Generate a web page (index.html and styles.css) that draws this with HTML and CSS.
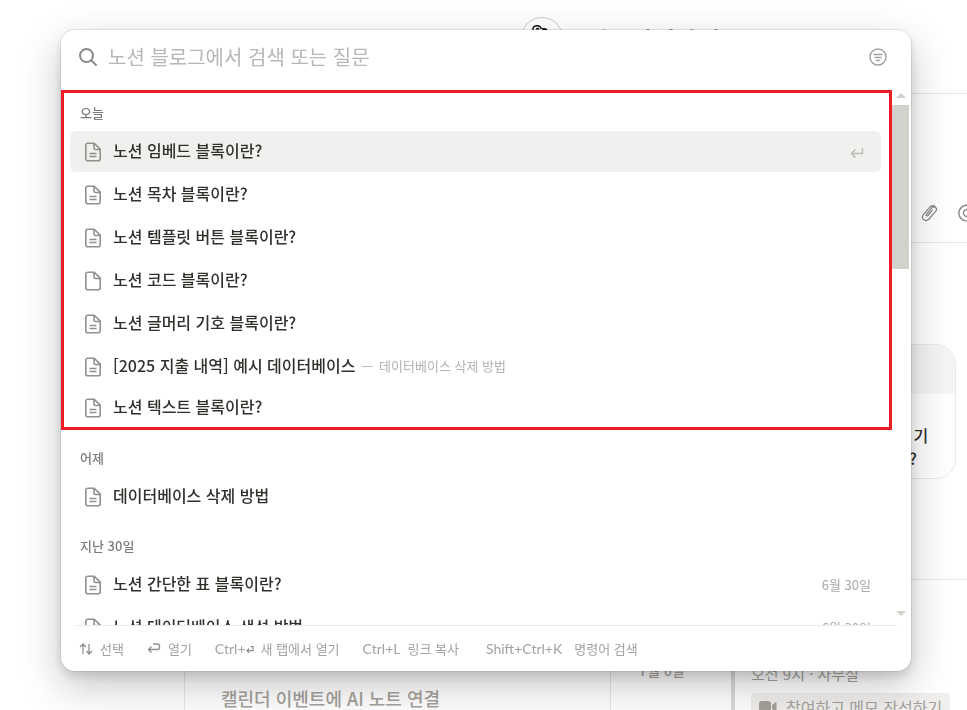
FILE: index.html
```html
<!DOCTYPE html>
<html lang="ko">
  <head>
    <meta charset="UTF-8" />
    <meta name="viewport" content="width=device-width, initial-scale=1.0" />
    <title>노션 블로그 검색</title>
    <link rel="stylesheet" href="styles.css" />
  </head>
  <body>
    <!-- Shared icons -->
    <svg class="icon-defs" aria-hidden="true">
      <symbol id="icon-page" viewBox="0 0 20 22">
        <path d="M5 2.2h6.2l6 6v9.600a2 2 0 0 1-2 2H4.800a2 2 0 0 1-2-2V4.200a2 2 0 0 1 2-2z M11 2.400v4.600a1.500 1.500 0 0 0 1.500 1.500H17" />
        <path d="M6.500 12.500h7M6.500 15.500h7" />
      </symbol>
      <symbol id="icon-blank" viewBox="0 0 20 22">
        <path d="M5 2.200h6.200l6 6v9.600a2 2 0 0 1-2 2H4.800a2 2 0 0 1-2-2V4.200a2 2 0 0 1 2-2z M11 2.400v4.600a1.500 1.500 0 0 0 1.500 1.500H17" />
      </symbol>
      <symbol id="icon-enter" viewBox="0 0 14 14">
        <path d="M12.500 2v5.500h-11M5.500 3.500L1.500 7.500L5.500 11.500" />
      </symbol>
    </svg>

    <!-- Home page behind the dialog -->
    <main class="home">
      <header class="greeting">
        <span class="avatar">
          <svg width="42" height="42" viewBox="0 0 42 42" fill="none" stroke="#111" stroke-width="1.500">
            <path d="M12 13c-1-5 7-6 8.500-1M15 12.500c1-1.200 2.500-1.200 3 0" />
            <path d="M21 12.500c1.500-.8 3-.8 5 .5" stroke-width="2" />
          </svg>
        </span>
        <h1>다시안녕하세</h1>
      </header>

      <section class="ask-box">
        <button class="icon-button" aria-label="파일 첨부">
          <svg width="18" height="20" viewBox="0 0 18 20" fill="none" stroke="#888" stroke-width="1.300" stroke-linecap="round" stroke-linejoin="round">
            <path d="M12.300 7.300L8 12.500c-.9 1-2.300 0-1.500-1.200l5.300-6.400c2.400-2.700 6.200.3 4 3.200L9 16c-3.400 3.700-8.600-.4-5.600-4.400l6.200-7.300c2-2 4.300-2 5.600-.6" />
          </svg>
        </button>
        <button class="icon-button" aria-label="멘션">
          <svg width="20" height="20" viewBox="0 0 20 20" fill="none" stroke="#888" stroke-width="1.400" stroke-linecap="round">
            <circle cx="10" cy="10" r="3.500" />
            <path d="M13.500 7v4.500c0 2.500 4 2.500 4-1.500a7.800 7.800 0 1 0-3 6.200" />
          </svg>
        </button>
      </section>

      <section class="learn">
        <a href="#" class="learn-card">
          <span class="learn-cover"></span>
          <span class="learn-title">데이터베이스의 기<br />능활용해볼까요?</span>
        </a>
      </section>

      <section class="calendar">
        <div class="calendar-intro">캘린더 이벤트에 AI 노트 연결</div>
        <div class="calendar-date">7월 6일</div>
        <div class="calendar-event">
          <p>오전 9시 · 사무실</p>
          <button class="join-button">
            <svg width="18" height="14" viewBox="0 0 18 14" fill="#a5a29c">
              <rect x="0" y="1" width="12" height="12" rx="3" />
              <path d="M13 5l3-2.500q1.500-1 1.500 1v7q0 2-1.500 1L13 9z" />
            </svg>
            참여하고 메모 작성하기
          </button>
        </div>
      </section>
    </main>

    <!-- Search dialog -->
    <div class="search-dialog" role="dialog" aria-label="검색">
      <div class="search-bar">
        <svg width="20" height="20" viewBox="0 0 20 20" fill="none" stroke="#8a8986" stroke-width="2" stroke-linecap="round">
          <circle cx="8.500" cy="8.500" r="6.500" />
          <path d="M13.500 13.500l4.500 4.500" />
        </svg>
        <input type="text" aria-label="검색" placeholder="노션 블로그에서 검색 또는 질문" />
        <button class="icon-button" aria-label="필터">
          <svg width="18" height="18" viewBox="0 0 18 18" fill="none" stroke="#a09f9c" stroke-width="1.400" stroke-linecap="round">
            <circle cx="9" cy="9" r="8" />
            <path d="M5 6.500h8M6 9.500h6M7.500 12.500h3" />
          </svg>
        </button>
      </div>

      <div class="results">
        <div class="result-list">
          <section class="result-group today">
            <h2>오늘</h2>
            <a href="#" class="result selected">
              <svg class="page-icon"><use href="#icon-page" /></svg>
              <span class="title">노션 임베드 블록이란?</span>
              <svg class="enter-icon"><use href="#icon-enter" /></svg>
            </a>
            <a href="#" class="result">
              <svg class="page-icon"><use href="#icon-page" /></svg>
              <span class="title">노션 목차 블록이란?</span>
            </a>
            <a href="#" class="result">
              <svg class="page-icon"><use href="#icon-page" /></svg>
              <span class="title">노션 템플릿 버튼 블록이란?</span>
            </a>
            <a href="#" class="result">
              <svg class="page-icon"><use href="#icon-blank" /></svg>
              <span class="title">노션 코드 블록이란?</span>
            </a>
            <a href="#" class="result">
              <svg class="page-icon"><use href="#icon-page" /></svg>
              <span class="title">노션 글머리 기호 블록이란?</span>
            </a>
            <a href="#" class="result">
              <svg class="page-icon"><use href="#icon-page" /></svg>
              <span class="title">[2025 지출 내역] 예시 데이터베이스</span>
              <span class="parent">데이터베이스 삭제 방법</span>
            </a>
            <a href="#" class="result">
              <svg class="page-icon"><use href="#icon-page" /></svg>
              <span class="title">노션 텍스트 블록이란?</span>
            </a>
          </section>

          <section class="result-group">
            <h2>어제</h2>
            <a href="#" class="result">
              <svg class="page-icon"><use href="#icon-page" /></svg>
              <span class="title">데이터베이스 삭제 방법</span>
            </a>
          </section>

          <section class="result-group">
            <h2>지난 30일</h2>
            <a href="#" class="result">
              <svg class="page-icon"><use href="#icon-page" /></svg>
              <span class="title">노션 간단한 표 블록이란?</span>
              <span class="date">6월 30일</span>
            </a>
            <a href="#" class="result">
              <svg class="page-icon"><use href="#icon-page" /></svg>
              <span class="title">노션 데이터베이스 생성 방법</span>
              <span class="date">6월 30일</span>
            </a>
          </section>
        </div>

        <div class="scrollbar" aria-hidden="true">
          <span class="arrow arrow-up"></span>
          <span class="thumb"></span>
          <span class="arrow arrow-down"></span>
        </div>
      </div>

      <footer class="shortcuts">
        <span class="shortcut">
          <svg width="14" height="14" viewBox="0 0 14 14"><path d="M4 12V2M1 5l3-3l3 3M10 2v10M7.500 9l2.500 3l3-3" /></svg>
          선택
        </span>
        <span class="shortcut">
          <svg width="14" height="14" viewBox="0 0 14 14"><path d="M6 2h4.500q2 0 2 2v1.500q0 2-2 2H1.500M4.500 4.500l-3 3l3 3" /></svg>
          열기
        </span>
        <span class="shortcut">
          <kbd>Ctrl+<svg width="8" height="8" viewBox="0 0 8 8"><path d="M4.500 .7h2.500v4H1M3 2.700l-2 2l2 2" /></svg></kbd>
          새 탭에서 열기
        </span>
        <span class="shortcut"><kbd>Ctrl+L</kbd> 링크 복사</span>
        <span class="shortcut wide"><kbd>Shift+Ctrl+K</kbd> 명령어 검색</span>
      </footer>
    </div>
  </body>
</html>
```
FILE: styles.css
```css
/* Global Styles */
* {
  box-sizing: border-box;
}

body {
  margin: 0;
  height: 100vh;
  overflow: hidden;
  font-family: "Noto Sans CJK KR", sans-serif;
  background-color: #ffffff;
  color: #32302c;
}

h1,
h2,
p {
  margin: 0;
}

a {
  color: inherit;
  text-decoration: none;
}

button {
  border: none;
  padding: 0;
  background: none;
  font-family: inherit;
}

.icon-defs {
  display: none;
}

.icon-button {
  display: flex;
}

/* Home page */
.home {
  height: 100vh;
  padding-top: 17px;
  overflow: hidden;
}

.greeting {
  display: flex;
  justify-content: center;
  align-items: center;
  gap: 24px;
  height: 42px;
  padding-left: 273px;
}

.greeting h1 {
  padding-top: 4px;
  font-size: 24px;
  line-height: 38px;
  font-weight: 700;
}

.avatar {
  display: flex;
  width: 42px;
  height: 42px;
  border-radius: 50%;
  box-shadow: inset 0 0 0 1px #cfcfcf;
}

.ask-box {
  display: flex;
  justify-content: flex-end;
  align-items: flex-end;
  gap: 19px;
  height: 150px;
  margin: 34px -20px 0 184px;
  padding: 0 9px 19px;
  border: 1px solid #e6e6e5;
  border-radius: 16px;
}

.learn {
  display: flex;
  justify-content: flex-end;
  margin-top: 101px;
  padding-right: 11px;
}

.learn-card {
  width: 180px;
  height: 135px;
  border: 1px solid #e9e9e7;
  border-radius: 20px;
  background-color: #ffffff;
  overflow: hidden;
}

.learn-cover {
  display: block;
  height: 49px;
  background-color: #f5f5f3;
}

.learn-title {
  display: block;
  padding: 30px 0 0 29px;
  font-size: 16px;
  line-height: 23px;
  font-weight: 500;
  white-space: nowrap;
}

.calendar {
  display: flex;
  height: 200px;
  margin: 100px -20px 0 184px;
  padding-top: 82px;
  border: 1px solid #e6e6e5;
  color: #a5a29c;
}

.calendar-intro {
  width: 426px;
  padding: 22px 36px;
  border-right: 1px solid #e6e6e5;
  font-size: 18px;
  line-height: 28px;
  font-weight: 500;
}

.calendar-date {
  width: 120px;
  padding-left: 28px;
  font-size: 14px;
  line-height: 16px;
  font-weight: 500;
}

.calendar-event {
  border-left: 4px solid #dcdad6;
  padding-left: 16px;
  font-size: 15px;
}

.calendar-event p {
  line-height: 24px;
}

.join-button {
  display: flex;
  align-items: center;
  gap: 9px;
  margin-top: 7px;
  padding: 0 8px;
  border-radius: 4px;
  background-color: #f0efed;
  color: #a5a29c;
  font-size: 16px;
  line-height: 28px;
}

/* Search dialog */
.search-dialog {
  position: fixed;
  top: 30px;
  left: 61px;
  right: 56px;
  border-radius: 14px;
  background-color: #ffffff;
  box-shadow: 0 0 0 1px rgba(15, 15, 15, 0.08), 0 5px 10px rgba(15, 15, 15, 0.12),
    0 15px 40px rgba(15, 15, 15, 0.24);
}

.search-bar {
  display: flex;
  align-items: center;
  gap: 10px;
  height: 60px;
  padding: 0 24px 6px 17px;
}

.search-bar input {
  flex: 1;
  min-width: 0;
  height: 32px;
  border: none;
  outline: none;
  padding: 0 0 2px;
  background: none;
  font-family: inherit;
  font-size: 20px;
  color: #32302c;
}

.search-bar input::placeholder {
  color: #b8b7b4;
}

/* Results */
.results {
  display: flex;
  height: 535px;
}

.result-list {
  flex: 1;
  height: 535px;
  overflow: hidden;
}

.result-group {
  padding: 0 11px 9px 9px;
}

.result-group h2 {
  padding-left: 10px;
  font-size: 13px;
  line-height: 36px;
  font-weight: 500;
  color: #7d7c78;
}

/* Red frame around today's results */
.result-group.today {
  margin-bottom: 10px;
  padding: 2px 8px 0 6px;
  border: 3px solid #ee1c25;
}

.result {
  display: flex;
  align-items: center;
  height: 41px;
  margin-bottom: 2px;
  padding: 0 10px 0 13px;
  border-radius: 6px;
}

.today .result:last-child {
  height: 38px;
  margin-bottom: 0;
}

.result.selected {
  background-color: #f1f0ef;
}

.page-icon {
  width: 20px;
  height: 22px;
  margin-right: 10px;
  fill: none;
  stroke: #91908d;
  stroke-width: 1.6;
}

.title {
  padding-bottom: 4px;
  font-size: 16px;
  line-height: 24px;
  font-weight: 500;
}

.enter-icon {
  width: 14px;
  height: 14px;
  margin: 2px 7px 0 auto;
  fill: none;
  stroke: #bdbcb9;
  stroke-width: 1.5;
}

.parent {
  padding-bottom: 2px;
  font-size: 13px;
  color: #b4b3b0;
}

.parent::before {
  content: "—";
  margin: 0 6px;
}

.date {
  margin-left: auto;
  font-size: 13px;
  color: #a9a8a5;
}

/* Scrollbar */
.scrollbar {
  display: flex;
  flex-direction: column;
  width: 19px;
  padding: 3px 2px 9px 0;
}

.thumb {
  height: 164px;
  margin: 7px 0 auto;
  background-color: #d3d1cb;
}

.arrow {
  align-self: center;
  border: 5px solid transparent;
}

.arrow-up {
  border-top-width: 0;
  border-bottom-color: #d3d1cb;
}

.arrow-down {
  border-bottom-width: 0;
  border-top-color: #d3d1cb;
}

/* Shortcuts */
.shortcuts {
  display: flex;
  align-items: center;
  gap: 23px;
  height: 46px;
  margin: 0 14px;
  padding: 0 4px;
  border-top: 1px solid #ebebea;
  font-size: 13px;
  color: #a3a29f;
  white-space: nowrap;
}

.shortcut {
  display: flex;
  align-items: center;
  gap: 7px;
}

.shortcut svg {
  fill: none;
  stroke: #91908d;
  stroke-width: 1.3;
}

.shortcut kbd {
  font-family: Lato, sans-serif;
  font-size: 14px;
}

.shortcut.wide {
  gap: 12px;
  margin-left: 4px;
}
```
